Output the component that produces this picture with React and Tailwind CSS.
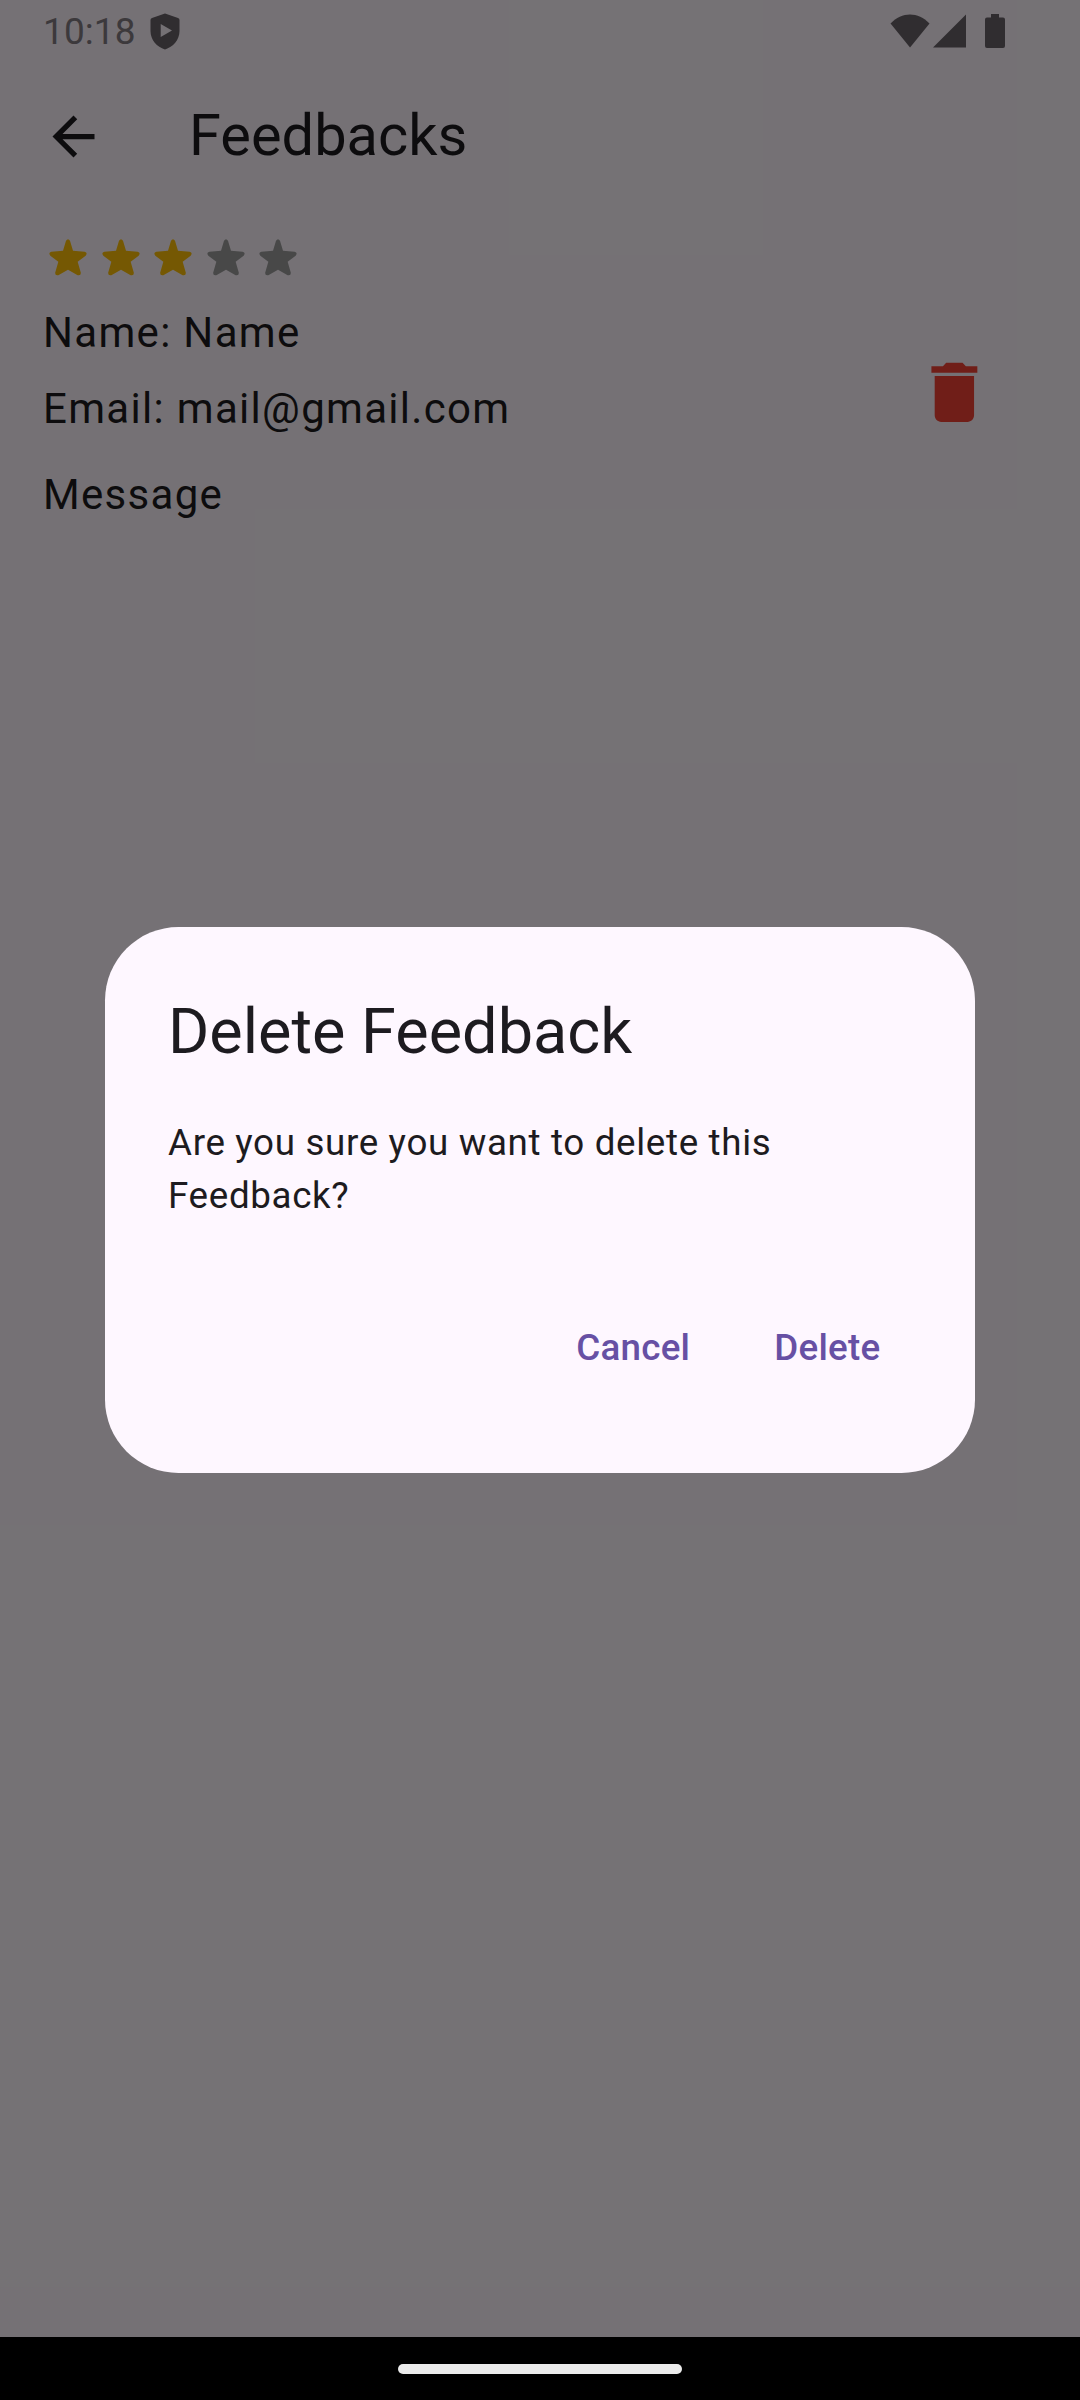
const STAR =
  "M51 5 Q57 -4 63 5 L72 35 L107 38 Q117 41 110 50 L86 68 L95.500 101 Q96 111 86 108.500 L57 92 L28 108.500 Q18 111 18.500 101 L28 68 L4 50 Q-3 41 7 38 L42 35 Z";

function StatusBar() {
  return (
    <header className="relative z-20 flex h-[63px] items-center text-[#302d30]">
      <span className="ml-[43px] w-[93px] text-[37px] leading-[63px] tracking-[0.1px] text-[#3c393c]">10:18</span>
      <svg className="ml-[14px] h-[37px] w-[30px]" viewBox="0 0 30 37" fill="currentColor">
        <path fillRule="evenodd" d="M15 0.500 L28 5 Q29.500 5.700 29.500 7 V18 C29.500 27 23 34 15 36.500 C7 34 0.500 27 0.500 18 V7 Q0.500 5.700 2 5 Z M10.700 11 V24 L22 17.500 Z" />
      </svg>
      <div className="mr-[75px] mb-[2px] ml-auto flex items-start">
        <svg className="h-[34px] w-[40px]" viewBox="0 0 40 34" fill="currentColor">
          <path d="M0.500 9.500 C12 -2.500 28 -2.500 39.500 9.500 L20 33.500 Z" />
        </svg>
        <svg className="ml-[3px] h-[34px] w-[33px]" viewBox="0 0 33 34" fill="currentColor">
          <path d="M33 0.500 V33.500 H0 Z" />
        </svg>
        <svg className="ml-[19px] h-[34px] w-[20px]" viewBox="0 0 20 34" fill="currentColor">
          <path d="M6 0H14V3.500H18Q20 3.500 20 5.500V32Q20 34 18 34H2Q0 34 0 32V5.500Q0 3.500 2 3.500H6Z" />
        </svg>
      </div>
    </header>
  );
}

function AppBar() {
  return (
    <div className="flex h-[147px] items-center pl-[42px]">
      <svg className="size-[63px]" viewBox="0 0 24 24" fill="currentColor">
        <path d="M20 11H7.830l5.590-5.590L12 4l-8 8 8 8 1.410-1.410L7.830 13H20v-2z" />
      </svg>
      <h1 className="mb-[2px] ml-[84px] text-[57.750px] leading-[73.500px]">Feedbacks</h1>
    </div>
  );
}

function Rating({ value }) {
  return (
    <div className="flex">
      {[1, 2, 3, 4, 5].map((n) => (
        <div key={n} className="flex w-[52.500px] justify-center">
          <svg
            className={n <= value ? "h-[37px] w-[38px] text-[#ffc107]" : "h-[37px] w-[38px] text-[#9e9e9e]"}
            viewBox="0 0 114 111"
            fill="currentColor"
          >
            <path d={STAR} />
          </svg>
        </div>
      ))}
    </div>
  );
}

function FeedbackItem() {
  return (
    <div className="flex items-start justify-between pt-[29px] pr-[86.500px] pl-[42px]">
      <div className="text-[42px] leading-[63px] tracking-[1.312px]">
        <Rating value={3} />
        <div className="pl-[1px]">
          <p className="mt-[25px]">Name: Name</p>
          <p className="mt-[13px]">Email: mail@gmail.com</p>
          <p className="mt-[23px]">Message</p>
        </div>
      </div>
      <svg className="mt-[114px] size-[78.750px] text-[#f44336]" viewBox="0 0 24 24" fill="currentColor">
        <path d="M6 19c0 1.100.9 2 2 2h8c1.100 0 2-.9 2-2V7H6v12zM19 4h-3.500l-1-1h-5l-1 1H5v2h14V4z" />
      </svg>
    </div>
  );
}

function DeleteDialog() {
  return (
    <div className="absolute inset-0 z-10 flex items-center justify-center bg-black/54">
      <div role="dialog" className="h-[546px] w-[870px] rounded-[73.500px] bg-[#fef7ff] p-[63px]">
        <h2 className="text-[63px] leading-[84px]">Delete Feedback</h2>
        <p className="mt-[43px] text-[36.750px] leading-[52.500px] tracking-[0.656px]">
          Are you sure you want to delete this Feedback?
        </p>
        <div className="mt-[63px] flex h-[126px] justify-end gap-[21px] text-[36.750px] font-medium tracking-[0.262px] text-[#6750a4]">
          <button className="px-[31.500px]">Cancel</button>
          <button className="px-[31.500px]">Delete</button>
        </div>
      </div>
    </div>
  );
}

export default function App() {
  return (
    <div className="relative flex h-[2400px] w-[1080px] flex-col overflow-hidden bg-[#fef7ff] font-['Roboto',sans-serif] text-[#1d1b20]">
      <StatusBar />
      <AppBar />
      <FeedbackItem />
      <DeleteDialog />
      <div className="relative z-20 mt-auto flex h-[63px] items-center justify-center bg-black">
        <div className="h-[10px] w-[284px] rounded-full bg-[#ebebeb]" />
      </div>
    </div>
  );
}
